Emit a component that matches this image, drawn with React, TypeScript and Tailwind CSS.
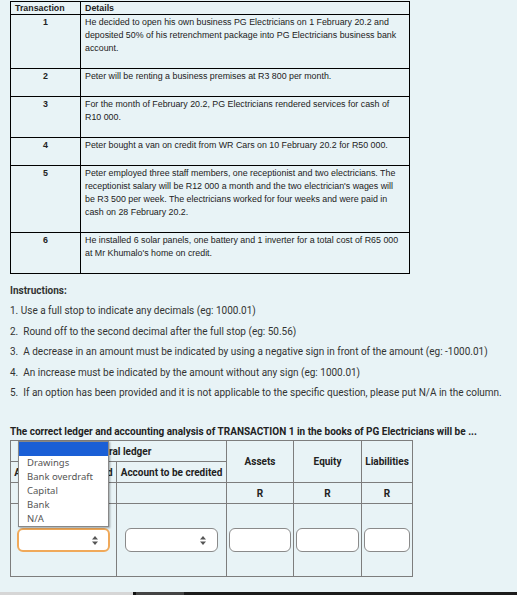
import React from 'react';

const transactions = [
  {
    no: '1',
    text: 'He decided to open his own business PG Electricians on 1 February 20.2 and deposited 50% of his retrenchment package into PG Electricians business bank account.',
  },
  { no: '2', text: 'Peter will be renting a business premises at R3 800 per month.' },
  { no: '3', text: 'For the month of February 20.2, PG Electricians rendered services for cash of R10 000.' },
  { no: '4', text: 'Peter bought a van on credit from WR Cars on 10 February 20.2 for R50 000.' },
  {
    no: '5',
    text: "Peter employed three staff members, one receptionist and two electricians. The receptionist salary will be R12 000 a month and the two electrician's wages will be R3 500 per week. The electricians worked for four weeks and were paid in cash on 28 February 20.2.",
  },
  { no: '6', text: "He installed 6 solar panels, one battery and 1 inverter for a total cost of R65 000 at Mr Khumalo's home on credit." },
];

const instructions = [
  '1. Use a full stop to indicate any decimals (eg: 1000.01)',
  '2.  Round off to the second decimal after the full stop (eg: 50.56)',
  '3.  A decrease in an amount must be indicated by using a negative sign in front of the amount (eg: -1000.01)',
  '4.  An increase must be indicated by the amount without any sign (eg: 1000.01)',
  '5.  If an option has been provided and it is not applicable to the specific question, please put N/A in the column.',
];

const options = ['Drawings', 'Bank overdraft', 'Capital', 'Bank', 'N/A'];

const Arrows = () => (
  <svg width="6" height="9" viewBox="0 0 6 9" className="fill-[#555]">
    <path d="M3 0 L6 3.5 L0 3.5 Z" />
    <path d="M3 9 L6 5.5 L0 5.5 Z" />
  </svg>
);

const FakeSelect: React.FC<{ focused?: boolean }> = ({ focused }) => (
  <div
    className={
      focused
        ? 'h-[24px] rounded-[6px] border-2 border-[#f0a95a] bg-white flex items-center justify-end pr-[10px]'
        : 'h-[24px] rounded-[6px] border border-[#8a8a8a] bg-white flex items-center justify-end pr-[11px]'
    }
  >
    <Arrows />
  </div>
);

const cell = 'border border-[#7d7d7d] p-0';

const App: React.FC = () => {
  return (
    <div className="min-h-screen bg-[#e8f3f6] flex flex-col text-[#222]">
      <div className="pt-[1px] px-[10px]">
        <table
          className="w-[400px] border-collapse border border-black text-[8.85px] leading-[13px] text-[#222]"
          style={{ fontFamily: '"Liberation Sans", Arial, sans-serif' }}
        >
          <thead>
            <tr>
              <th className="w-[70px] border border-black font-bold text-left pl-[4px] leading-[12px]">Transaction</th>
              <th className="border border-black font-bold text-left pl-[4px] leading-[12px]">Details</th>
            </tr>
          </thead>
          <tbody>
            {transactions.map((t) => (
              <tr key={t.no}>
                <td className="border border-black align-top text-center font-bold pt-[1px] pb-[13px]">{t.no}</td>
                <td className="border border-black align-top pl-[4px] pr-[6px] pt-[1px] pb-[13px]">{t.text}</td>
              </tr>
            ))}
          </tbody>
        </table>
      </div>

      <div className="px-[10px] text-[10px] text-[#333]" style={{ fontFamily: 'Roboto, "Liberation Sans", sans-serif' }}>
        <div className="mt-[11px] font-bold leading-[12px]">Instructions:</div>
        <div className="mt-[8px] flex flex-col gap-[8.5px]">
          {instructions.map((s) => (
            <div key={s} className="leading-[12px] whitespace-pre">
              {s}
            </div>
          ))}
        </div>

        <div className="mt-[27px] font-bold text-[10px] leading-[12px] text-[#222]">
          The correct ledger and accounting analysis of TRANSACTION 1 in the books of PG Electricians will be ...
        </div>

        <table className="mt-[2px] w-[402px] table-fixed border-collapse border border-[#7d7d7d] text-[10px] font-bold text-[#222] whitespace-nowrap">
          <colgroup>
            <col className="w-[106px]" />
            <col className="w-[110px]" />
            <col className="w-[67px]" />
            <col className="w-[68px]" />
            <col className="w-[51px]" />
          </colgroup>
          <tbody>
            <tr className="h-[21px]">
              <td colSpan={2} className={`${cell} text-center`}>General ledger</td>
              <td rowSpan={2} className={`${cell} text-center`}>Assets</td>
              <td rowSpan={2} className={`${cell} text-center`}>Equity</td>
              <td rowSpan={2} className={`${cell} text-center`}>Liabilities</td>
            </tr>
            <tr className="h-[21px]">
              <td className={`${cell} text-center`}>Account to be debited</td>
              <td className={`${cell} text-center`}>Account to be credited</td>
            </tr>
            <tr className="h-[21px]">
              <td className={cell} />
              <td className={cell} />
              <td className={`${cell} text-center`}>R</td>
              <td className={`${cell} text-center`}>R</td>
              <td className={`${cell} text-center`}>R</td>
            </tr>
            <tr className="h-[73px]">
              <td className={`${cell} px-[6px]`}>
                <div className="relative">
                  <FakeSelect focused />
                  <div
                    className="absolute left-[1px] right-[1px] bottom-full mb-[1px] bg-white border border-[#888] shadow-[1px_1px_2px_rgba(0,0,0,0.35)] text-[9.5px] font-normal text-[#555]"
                    style={{ fontFamily: '"Noto Sans", "Open Sans", sans-serif' }}
                  >
                    <div className="h-[14px] bg-[#1a5fd6]" />
                    {options.map((o) => (
                      <div key={o} className="h-[14px] leading-[14px] pl-[8px]">
                        {o}
                      </div>
                    ))}
                  </div>
                </div>
              </td>
              <td className={`${cell} px-[8px]`}>
                <FakeSelect />
              </td>
              <td className={`${cell} px-[2px]`}>
                <div className="h-[24px] rounded-[6px] border border-[#8a8a8a] bg-white" />
              </td>
              <td className={`${cell} px-[2px]`}>
                <div className="h-[24px] rounded-[6px] border border-[#8a8a8a] bg-white" />
              </td>
              <td className={`${cell} px-[2px]`}>
                <div className="h-[24px] rounded-[6px] border border-[#8a8a8a] bg-white" />
              </td>
            </tr>
          </tbody>
        </table>
      </div>

      <div className="mt-auto flex h-[3px]">
        <div className="w-[133px] bg-[#d6d6d6]" />
        <div className="w-[3px] bg-[#111]" />
        <div className="w-[48px] bg-[#444]" />
        <div className="flex-1 bg-[#1c1c1c]" />
      </div>
    </div>
  );
};

export default App;
